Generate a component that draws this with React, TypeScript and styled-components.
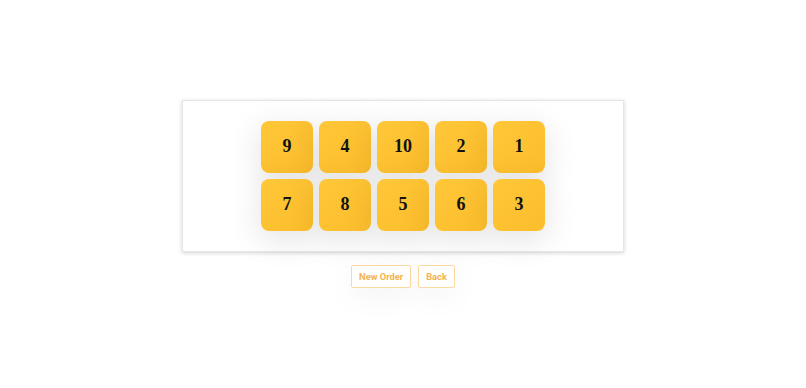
import styled, { createGlobalStyle } from "styled-components";

const GlobalStyle = createGlobalStyle`
  html, body {
    margin: 0;
    padding: 0;
    background: #ffffff;
    font-family: "Liberation Sans", Arial, sans-serif;
  }
`;

const Page = styled.div`
  width: 100vw;
  height: 100vh;
  display: flex;
  flex-direction: column;
  align-items: center;
  justify-content: center;
  gap: 13px;
  padding-bottom: 1px;
  box-sizing: border-box;
`;

const Board = styled.div`
  width: 440px;
  padding: 20px 0;
  background: #ffffff;
  border: 1px solid #e6e6e6;
  box-shadow: 0 1px 4px rgba(0, 0, 0, 0.18);
  display: flex;
  justify-content: center;
`;

const Grid = styled.div`
  display: grid;
  grid-template-columns: repeat(5, 52px);
  grid-auto-rows: 52px;
  gap: 6px;
`;

const Tile = styled.div`
  border-radius: 8px;
  background: linear-gradient(135deg, #ffc738 0%, #fbbd2c 100%);
  box-shadow: 0 8px 34px rgba(0, 0, 0, 0.12);
  display: flex;
  align-items: center;
  justify-content: center;
  font-family: "Liberation Serif", "Times New Roman", serif;
  font-weight: bold;
  font-size: 18px;
  color: #111111;
`;

const Actions = styled.div`
  display: flex;
  gap: 7px;
`;

const Button = styled.button`
  height: 23px;
  padding: 0 7px;
  background: #ffffff;
  border: 1px solid #fcd9a0;
  border-radius: 2px;
  color: #f5b24a;
  font-family: Roboto, "Liberation Sans", Arial, sans-serif;
  font-weight: bold;
  font-size: 9.3px;
  box-shadow: 0 8px 30px rgba(0, 0, 0, 0.05);
  cursor: pointer;
`;

const numbers = [9, 4, 10, 2, 1, 7, 8, 5, 6, 3];

export default function App() {
  return (
    <>
      <GlobalStyle />
      <Page>
        <Board>
          <Grid>
            {numbers.map((n) => (
              <Tile key={n}>{n}</Tile>
            ))}
          </Grid>
        </Board>
        <Actions>
          <Button>New Order</Button>
          <Button>Back</Button>
        </Actions>
      </Page>
    </>
  );
}
